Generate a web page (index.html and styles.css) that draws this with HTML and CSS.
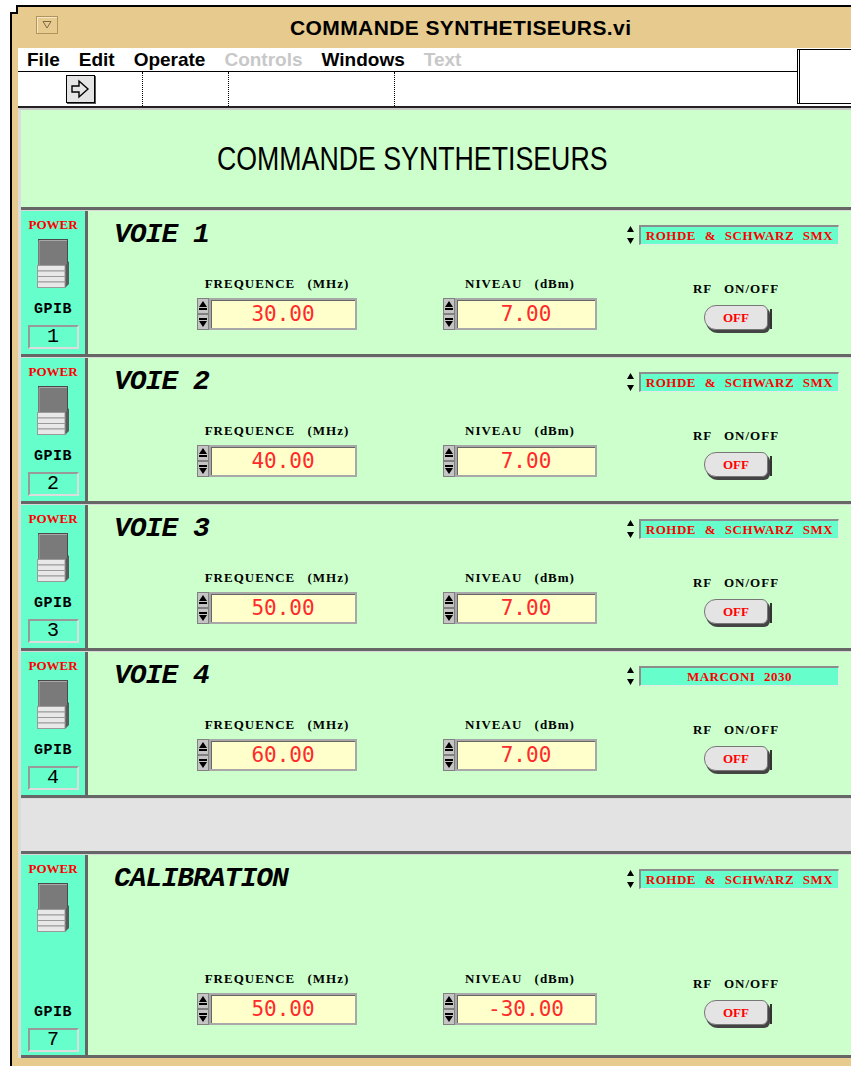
FILE: index.html
```html
<!DOCTYPE html>
<html lang="fr">
<head>
  <meta charset="UTF-8">
  <title>COMMANDE SYNTHETISEURS.vi</title>
  <link rel="stylesheet" href="styles.css">
</head>
<body>

<div class="window">
  <div class="titlebar">
    <span class="winbtn">
      <svg width="10" height="9" viewBox="0 0 10 9"><path d="M1 1.5 H9 L5 8 Z" fill="none" stroke="#7d6a48"/></svg>
    </span>
    <span class="wintitle">COMMANDE SYNTHETISEURS.vi</span>
  </div>

  <div class="inner">
    <div class="bars">
      <div class="bars-left">
        <div class="menubar">
          <span>File</span>
          <span>Edit</span>
          <span>Operate</span>
          <span class="off">Controls</span>
          <span>Windows</span>
          <span class="off">Text</span>
        </div>
        <div class="toolbar">
          <div class="tool tool-run">
            <span class="runbtn">
              <svg width="20" height="20" viewBox="0 0 20 20"><path d="M2 7 H9 V2 L18 10 L9 18 V13 H2 Z" fill="#e4e4e4" stroke="#000" stroke-width="1.4"/></svg>
            </span>
          </div>
          <div class="tool tool-2"></div>
          <div class="tool tool-3"></div>
          <div class="tool tool-4"></div>
        </div>
      </div>
      <div class="corner"></div>
    </div>

    <div class="panel">
      <div class="head"><span>COMMANDE SYNTHETISEURS</span></div>

      <!-- VOIE 1 -->
      <div class="voie">
        <div class="power">
          <div class="power-label">POWER</div>
          <svg class="switch" width="33" height="50" viewBox="0 0 33 50">
            <rect x="1.5" y="0.5" width="29" height="26" fill="#7a7a7a" stroke="#4a4a4a"/>
            <path d="M2 1.5 H30 M2 1.5 V26" stroke="#a8a8a8"/>
            <path d="M28 27 L32 22 V45 L28 49 Z" fill="#5a5a5a"/>
            <g fill="#e8e8e8" stroke="#9a9a9a">
              <rect x="0.5" y="26.5" width="27.5" height="5.5"/>
              <rect x="0.5" y="32" width="27.5" height="5.5"/>
              <rect x="0.5" y="37.5" width="27.5" height="5.5"/>
              <rect x="0.5" y="43" width="27.5" height="5.5"/>
            </g>
          </svg>
          <div class="gpib-label">GPIB</div>
          <div class="gpib">1</div>
        </div>
        <div class="voie-main">
          <div class="voie-top">
            <div class="voie-name">VOIE 1</div>
            <div class="instr">
              <svg width="7" height="20" viewBox="0 0 7 20"><path d="M3.5 1 L7 7 H0 Z M0 13 H7 L3.5 19 Z"/></svg>
              <span class="instr-box">ROHDE &amp; SCHWARZ SMX</span>
            </div>
          </div>
          <div class="controls">
            <div class="ctl ctl-freq">
              <div class="ctl-label">FREQUENCE (MHz)</div>
              <div class="num">
                <svg class="spin" width="12" height="32" viewBox="0 0 12 32">
                  <rect x="0.5" y="0.5" width="11" height="15" fill="#c4c4c4" stroke="#808080"/>
                  <rect x="0.5" y="16.5" width="11" height="15" fill="#c4c4c4" stroke="#808080"/>
                  <path d="M6 3 L10 9 H2 Z M2 10 H10 V12 H2 Z M2 20 H10 V22 H2 Z M2 23 H10 L6 29 Z"/>
                </svg>
                <span class="num-box">30.00</span>
              </div>
            </div>
            <div class="ctl ctl-level">
              <div class="ctl-label">NIVEAU (dBm)</div>
              <div class="num">
                <svg class="spin" width="12" height="32" viewBox="0 0 12 32">
                  <rect x="0.5" y="0.5" width="11" height="15" fill="#c4c4c4" stroke="#808080"/>
                  <rect x="0.5" y="16.5" width="11" height="15" fill="#c4c4c4" stroke="#808080"/>
                  <path d="M6 3 L10 9 H2 Z M2 10 H10 V12 H2 Z M2 20 H10 V22 H2 Z M2 23 H10 L6 29 Z"/>
                </svg>
                <span class="num-box">7.00</span>
              </div>
            </div>
            <div class="ctl ctl-rf">
              <div class="ctl-label">RF ON/OFF</div>
              <div class="rf-btn">OFF</div>
            </div>
          </div>
        </div>
      </div>

      <!-- VOIE 2 -->
      <div class="voie">
        <div class="power">
          <div class="power-label">POWER</div>
          <svg class="switch" width="33" height="50" viewBox="0 0 33 50">
            <rect x="1.5" y="0.5" width="29" height="26" fill="#7a7a7a" stroke="#4a4a4a"/>
            <path d="M2 1.5 H30 M2 1.5 V26" stroke="#a8a8a8"/>
            <path d="M28 27 L32 22 V45 L28 49 Z" fill="#5a5a5a"/>
            <g fill="#e8e8e8" stroke="#9a9a9a">
              <rect x="0.5" y="26.5" width="27.5" height="5.5"/>
              <rect x="0.5" y="32" width="27.5" height="5.5"/>
              <rect x="0.5" y="37.5" width="27.5" height="5.5"/>
              <rect x="0.5" y="43" width="27.5" height="5.5"/>
            </g>
          </svg>
          <div class="gpib-label">GPIB</div>
          <div class="gpib">2</div>
        </div>
        <div class="voie-main">
          <div class="voie-top">
            <div class="voie-name">VOIE 2</div>
            <div class="instr">
              <svg width="7" height="20" viewBox="0 0 7 20"><path d="M3.5 1 L7 7 H0 Z M0 13 H7 L3.5 19 Z"/></svg>
              <span class="instr-box">ROHDE &amp; SCHWARZ SMX</span>
            </div>
          </div>
          <div class="controls">
            <div class="ctl ctl-freq">
              <div class="ctl-label">FREQUENCE (MHz)</div>
              <div class="num">
                <svg class="spin" width="12" height="32" viewBox="0 0 12 32">
                  <rect x="0.5" y="0.5" width="11" height="15" fill="#c4c4c4" stroke="#808080"/>
                  <rect x="0.5" y="16.5" width="11" height="15" fill="#c4c4c4" stroke="#808080"/>
                  <path d="M6 3 L10 9 H2 Z M2 10 H10 V12 H2 Z M2 20 H10 V22 H2 Z M2 23 H10 L6 29 Z"/>
                </svg>
                <span class="num-box">40.00</span>
              </div>
            </div>
            <div class="ctl ctl-level">
              <div class="ctl-label">NIVEAU (dBm)</div>
              <div class="num">
                <svg class="spin" width="12" height="32" viewBox="0 0 12 32">
                  <rect x="0.5" y="0.5" width="11" height="15" fill="#c4c4c4" stroke="#808080"/>
                  <rect x="0.5" y="16.5" width="11" height="15" fill="#c4c4c4" stroke="#808080"/>
                  <path d="M6 3 L10 9 H2 Z M2 10 H10 V12 H2 Z M2 20 H10 V22 H2 Z M2 23 H10 L6 29 Z"/>
                </svg>
                <span class="num-box">7.00</span>
              </div>
            </div>
            <div class="ctl ctl-rf">
              <div class="ctl-label">RF ON/OFF</div>
              <div class="rf-btn">OFF</div>
            </div>
          </div>
        </div>
      </div>

      <!-- VOIE 3 -->
      <div class="voie">
        <div class="power">
          <div class="power-label">POWER</div>
          <svg class="switch" width="33" height="50" viewBox="0 0 33 50">
            <rect x="1.5" y="0.5" width="29" height="26" fill="#7a7a7a" stroke="#4a4a4a"/>
            <path d="M2 1.5 H30 M2 1.5 V26" stroke="#a8a8a8"/>
            <path d="M28 27 L32 22 V45 L28 49 Z" fill="#5a5a5a"/>
            <g fill="#e8e8e8" stroke="#9a9a9a">
              <rect x="0.5" y="26.5" width="27.5" height="5.5"/>
              <rect x="0.5" y="32" width="27.5" height="5.5"/>
              <rect x="0.5" y="37.5" width="27.5" height="5.5"/>
              <rect x="0.5" y="43" width="27.5" height="5.5"/>
            </g>
          </svg>
          <div class="gpib-label">GPIB</div>
          <div class="gpib">3</div>
        </div>
        <div class="voie-main">
          <div class="voie-top">
            <div class="voie-name">VOIE 3</div>
            <div class="instr">
              <svg width="7" height="20" viewBox="0 0 7 20"><path d="M3.5 1 L7 7 H0 Z M0 13 H7 L3.5 19 Z"/></svg>
              <span class="instr-box">ROHDE &amp; SCHWARZ SMX</span>
            </div>
          </div>
          <div class="controls">
            <div class="ctl ctl-freq">
              <div class="ctl-label">FREQUENCE (MHz)</div>
              <div class="num">
                <svg class="spin" width="12" height="32" viewBox="0 0 12 32">
                  <rect x="0.5" y="0.5" width="11" height="15" fill="#c4c4c4" stroke="#808080"/>
                  <rect x="0.5" y="16.5" width="11" height="15" fill="#c4c4c4" stroke="#808080"/>
                  <path d="M6 3 L10 9 H2 Z M2 10 H10 V12 H2 Z M2 20 H10 V22 H2 Z M2 23 H10 L6 29 Z"/>
                </svg>
                <span class="num-box">50.00</span>
              </div>
            </div>
            <div class="ctl ctl-level">
              <div class="ctl-label">NIVEAU (dBm)</div>
              <div class="num">
                <svg class="spin" width="12" height="32" viewBox="0 0 12 32">
                  <rect x="0.5" y="0.5" width="11" height="15" fill="#c4c4c4" stroke="#808080"/>
                  <rect x="0.5" y="16.5" width="11" height="15" fill="#c4c4c4" stroke="#808080"/>
                  <path d="M6 3 L10 9 H2 Z M2 10 H10 V12 H2 Z M2 20 H10 V22 H2 Z M2 23 H10 L6 29 Z"/>
                </svg>
                <span class="num-box">7.00</span>
              </div>
            </div>
            <div class="ctl ctl-rf">
              <div class="ctl-label">RF ON/OFF</div>
              <div class="rf-btn">OFF</div>
            </div>
          </div>
        </div>
      </div>

      <!-- VOIE 4 -->
      <div class="voie">
        <div class="power">
          <div class="power-label">POWER</div>
          <svg class="switch" width="33" height="50" viewBox="0 0 33 50">
            <rect x="1.5" y="0.5" width="29" height="26" fill="#7a7a7a" stroke="#4a4a4a"/>
            <path d="M2 1.5 H30 M2 1.5 V26" stroke="#a8a8a8"/>
            <path d="M28 27 L32 22 V45 L28 49 Z" fill="#5a5a5a"/>
            <g fill="#e8e8e8" stroke="#9a9a9a">
              <rect x="0.5" y="26.5" width="27.5" height="5.5"/>
              <rect x="0.5" y="32" width="27.5" height="5.5"/>
              <rect x="0.5" y="37.5" width="27.5" height="5.5"/>
              <rect x="0.5" y="43" width="27.5" height="5.5"/>
            </g>
          </svg>
          <div class="gpib-label">GPIB</div>
          <div class="gpib">4</div>
        </div>
        <div class="voie-main">
          <div class="voie-top">
            <div class="voie-name">VOIE 4</div>
            <div class="instr">
              <svg width="7" height="20" viewBox="0 0 7 20"><path d="M3.5 1 L7 7 H0 Z M0 13 H7 L3.5 19 Z"/></svg>
              <span class="instr-box">MARCONI 2030</span>
            </div>
          </div>
          <div class="controls">
            <div class="ctl ctl-freq">
              <div class="ctl-label">FREQUENCE (MHz)</div>
              <div class="num">
                <svg class="spin" width="12" height="32" viewBox="0 0 12 32">
                  <rect x="0.5" y="0.5" width="11" height="15" fill="#c4c4c4" stroke="#808080"/>
                  <rect x="0.5" y="16.5" width="11" height="15" fill="#c4c4c4" stroke="#808080"/>
                  <path d="M6 3 L10 9 H2 Z M2 10 H10 V12 H2 Z M2 20 H10 V22 H2 Z M2 23 H10 L6 29 Z"/>
                </svg>
                <span class="num-box">60.00</span>
              </div>
            </div>
            <div class="ctl ctl-level">
              <div class="ctl-label">NIVEAU (dBm)</div>
              <div class="num">
                <svg class="spin" width="12" height="32" viewBox="0 0 12 32">
                  <rect x="0.5" y="0.5" width="11" height="15" fill="#c4c4c4" stroke="#808080"/>
                  <rect x="0.5" y="16.5" width="11" height="15" fill="#c4c4c4" stroke="#808080"/>
                  <path d="M6 3 L10 9 H2 Z M2 10 H10 V12 H2 Z M2 20 H10 V22 H2 Z M2 23 H10 L6 29 Z"/>
                </svg>
                <span class="num-box">7.00</span>
              </div>
            </div>
            <div class="ctl ctl-rf">
              <div class="ctl-label">RF ON/OFF</div>
              <div class="rf-btn">OFF</div>
            </div>
          </div>
        </div>
      </div>

      <div class="gap"></div>

      <!-- CALIBRATION -->
      <div class="voie calib">
        <div class="power">
          <div class="power-label">POWER</div>
          <svg class="switch" width="33" height="50" viewBox="0 0 33 50">
            <rect x="1.5" y="0.5" width="29" height="26" fill="#7a7a7a" stroke="#4a4a4a"/>
            <path d="M2 1.5 H30 M2 1.5 V26" stroke="#a8a8a8"/>
            <path d="M28 27 L32 22 V45 L28 49 Z" fill="#5a5a5a"/>
            <g fill="#e8e8e8" stroke="#9a9a9a">
              <rect x="0.5" y="26.5" width="27.5" height="5.5"/>
              <rect x="0.5" y="32" width="27.5" height="5.5"/>
              <rect x="0.5" y="37.5" width="27.5" height="5.5"/>
              <rect x="0.5" y="43" width="27.5" height="5.5"/>
            </g>
          </svg>
          <div class="gpib-label">GPIB</div>
          <div class="gpib">7</div>
        </div>
        <div class="voie-main">
          <div class="voie-top">
            <div class="voie-name">CALIBRATION</div>
            <div class="instr">
              <svg width="7" height="20" viewBox="0 0 7 20"><path d="M3.5 1 L7 7 H0 Z M0 13 H7 L3.5 19 Z"/></svg>
              <span class="instr-box">ROHDE &amp; SCHWARZ SMX</span>
            </div>
          </div>
          <div class="controls">
            <div class="ctl ctl-freq">
              <div class="ctl-label">FREQUENCE (MHz)</div>
              <div class="num">
                <svg class="spin" width="12" height="32" viewBox="0 0 12 32">
                  <rect x="0.5" y="0.5" width="11" height="15" fill="#c4c4c4" stroke="#808080"/>
                  <rect x="0.5" y="16.5" width="11" height="15" fill="#c4c4c4" stroke="#808080"/>
                  <path d="M6 3 L10 9 H2 Z M2 10 H10 V12 H2 Z M2 20 H10 V22 H2 Z M2 23 H10 L6 29 Z"/>
                </svg>
                <span class="num-box">50.00</span>
              </div>
            </div>
            <div class="ctl ctl-level">
              <div class="ctl-label">NIVEAU (dBm)</div>
              <div class="num">
                <svg class="spin" width="12" height="32" viewBox="0 0 12 32">
                  <rect x="0.5" y="0.5" width="11" height="15" fill="#c4c4c4" stroke="#808080"/>
                  <rect x="0.5" y="16.5" width="11" height="15" fill="#c4c4c4" stroke="#808080"/>
                  <path d="M6 3 L10 9 H2 Z M2 10 H10 V12 H2 Z M2 20 H10 V22 H2 Z M2 23 H10 L6 29 Z"/>
                </svg>
                <span class="num-box">-30.00</span>
              </div>
            </div>
            <div class="ctl ctl-rf">
              <div class="ctl-label">RF ON/OFF</div>
              <div class="rf-btn">OFF</div>
            </div>
          </div>
        </div>
      </div>
    </div>
  </div>
</div>

</body>
</html>
```

FILE: styles.css
```css
body {
  margin: 0;
  background: #fff;
  overflow: hidden;
  font-family: "Liberation Sans", Arial, sans-serif;
  color: #000;
}

/* fenetre */
.window {
  position: relative;
  margin: 5px 0 0 10px;
  border-top: 2px solid #000;
  border-left: 2px solid #000;
  background: #e7ca8d;
  padding-bottom: 8px;
}

.window::before {
  content: "";
  position: absolute;
  top: -2px;
  left: -2px;
  width: 6px;
  height: 7px;
  background: #fff;
  border-right: 2px solid #000;
  border-bottom: 2px solid #000;
}

.titlebar {
  height: 41px;
  display: flex;
  align-items: center;
}

.winbtn {
  margin: -6px 0 0 24px;
  width: 20px;
  height: 16px;
  border: 1px solid #b0945c;
  box-shadow: inset 1px 1px 0 #f6e9c8;
  display: flex;
  align-items: center;
  justify-content: center;
}

.wintitle {
  margin-left: 232px;
  font-weight: bold;
  font-size: 21px;
  letter-spacing: 0.4px;
}

.inner {
  margin-left: 6px;
}

/* menus */
.bars {
  display: flex;
  background: #fff;
  border-bottom: 2px solid #222;
}

.bars-left {
  flex: 1;
}

.menubar {
  height: 23px;
  border-bottom: 1px solid #000;
  display: flex;
  gap: 19px;
  padding-left: 9px;
  font-weight: bold;
  font-size: 19px;
  line-height: 23px;
}

.menubar .off {
  color: #c8c8c8;
}

.toolbar {
  display: flex;
  height: 34px;
}

.tool {
  border-right: 1px dotted #000;
}

.tool-run {
  width: 124px;
  display: flex;
  align-items: center;
  justify-content: center;
}

.tool-2 {
  width: 85px;
}

.tool-3 {
  width: 165px;
}

.tool-4 {
  flex: 1;
  border-right: 0;
}

.runbtn {
  width: 27px;
  height: 26px;
  background: #e4e4e4;
  border: 1px solid #000;
  box-shadow: 1px 1px 0 #555;
  display: flex;
  align-items: center;
  justify-content: center;
}

.corner {
  width: 51px;
  height: 53px;
  margin-top: 1px;
  border: 1px solid #000;
  border-left: 3px double #000;
  border-right: 0;
}

/* face avant */
.panel {
  border-top: 2px solid #c8c8c8;
  border-left: 3px solid #dcdcdc;
}

.head {
  height: 97px;
  background: #ccffcc;
  border-bottom: 3px solid #666;
  display: flex;
  align-items: center;
  padding-left: 196px;
}

.head span {
  display: inline-block;
  font-size: 34px;
  transform: scaleX(0.786);
  transform-origin: left center;
}

.voie {
  display: flex;
  height: 143px;
  background: #ccffcc;
  border-top: 1px solid #d8d8d8;
  border-bottom: 3px solid #666;
}

.calib {
  height: 200px;
}

.gap {
  height: 52px;
  background: #e3e3e3;
  border-top: 1px solid #d8d8d8;
  border-bottom: 3px solid #666;
}

.power {
  width: 67px;
  box-sizing: border-box;
  background: #66ffcc;
  border-right: 3px solid #666;
  display: flex;
  flex-direction: column;
  align-items: center;
  padding-top: 6px;
}

.power-label {
  font-family: "Liberation Serif", serif;
  font-weight: bold;
  font-size: 13px;
  line-height: 16px;
  color: #f00;
}

.switch {
  margin-top: 6px;
  display: block;
}

.gpib-label {
  margin-top: 13px;
  font: bold 15px/16px "Liberation Mono", monospace;
  letter-spacing: 0.5px;
}

.gpib {
  margin-top: 7px;
  width: 47px;
  height: 20px;
  border: 2px solid #999;
  border-right-color: #ddd;
  border-bottom-color: #ddd;
  font: 20px/20px "Liberation Mono", monospace;
  text-align: center;
}

.calib .power {
  padding-bottom: 3px;
}

.calib .gpib-label {
  margin-top: auto;
}

.voie-main {
  flex: 1;
  display: flex;
  flex-direction: column;
  justify-content: space-between;
  padding: 12px 12px 24px 0;
}

.calib .voie-main {
  padding-bottom: 30px;
}

.voie-top {
  display: flex;
  align-items: center;
  justify-content: space-between;
  padding-left: 26px;
  height: 24px;
}

.voie-name {
  font: italic bold 28px/24px "Liberation Mono", monospace;
  letter-spacing: -1px;
}

.instr {
  display: flex;
  align-items: center;
  gap: 5px;
}

.instr-box {
  width: 197px;
  height: 17px;
  background: #66ffcc;
  border-top: 2px solid #8c8c8c;
  border-left: 2px solid #8c8c8c;
  border-bottom: 1px solid #e8e8e8;
  border-right: 1px solid #e8e8e8;
  font: bold 13px/17px "Liberation Serif", serif;
  letter-spacing: 0.5px;
  word-spacing: 5px;
  color: #f00;
  text-align: center;
}

/* commandes */
.controls {
  display: flex;
  align-items: flex-end;
  padding-left: 109px;
}

.ctl {
  display: flex;
  flex-direction: column;
  align-items: center;
}

.ctl-freq {
  width: 160px;
  margin-right: 86px;
}

.ctl-level {
  width: 154px;
  margin-right: 89px;
}

.ctl-rf {
  width: 100px;
}

.ctl-label {
  font: bold 13px/14px "Liberation Serif", serif;
  letter-spacing: 1px;
  word-spacing: 8px;
  margin-bottom: 7px;
}

.ctl-rf .ctl-label {
  margin-bottom: 9px;
}

.num {
  display: flex;
}

.spin {
  display: block;
}

.num-box {
  width: 144px;
  height: 28px;
  background: #ffffcc;
  border: 2px solid #a8a8a8;
  box-shadow: inset 1px 1px 0 #666;
  color: #ff2a2a;
  font: 21px/28px "DejaVu Sans Mono", monospace;
  text-align: center;
}

.ctl-level .num-box {
  width: 138px;
}

.rf-btn {
  position: relative;
  width: 62px;
  height: 23px;
  background: #e4e4e4;
  border: 1px solid #777;
  border-radius: 12px 6px 6px 12px;
  box-shadow: 2px 3px 0 #444;
  font: bold 13px/23px "Liberation Serif", serif;
  color: #f00;
  text-align: center;
}

.rf-btn::after {
  content: "";
  position: absolute;
  top: 3px;
  right: -5px;
  width: 2px;
  height: 20px;
  background: #333;
}
```
